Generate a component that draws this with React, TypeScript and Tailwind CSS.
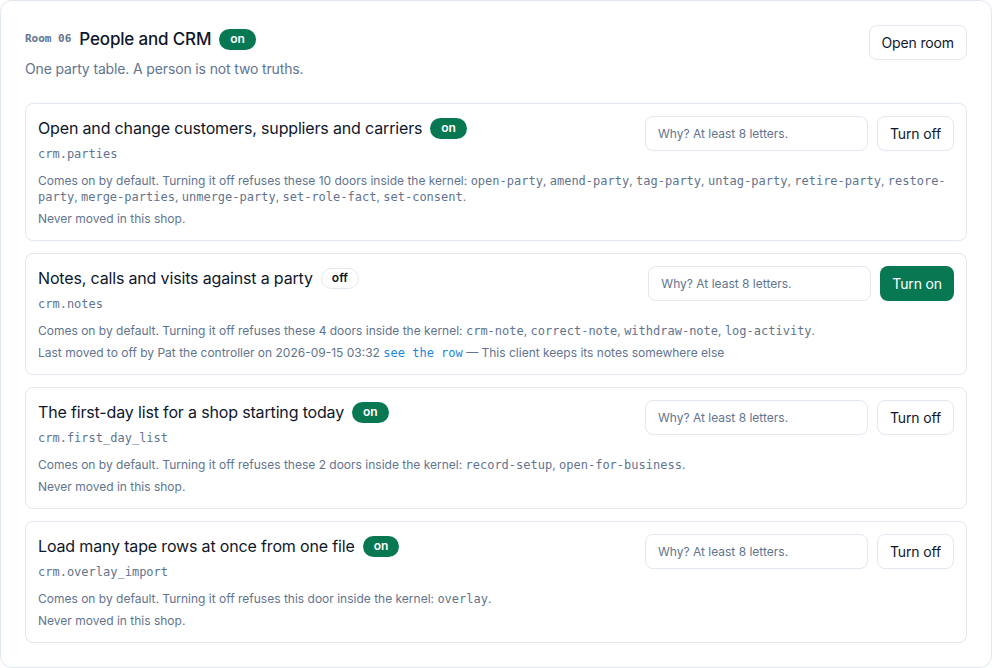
import React from "react";

type Switch = {
  title: string;
  on: boolean;
  key: string;
  doors: string[];
  countText: string;
  history: React.ReactNode;
};

const sans = "font-['Inter','Noto_Sans',sans-serif]";
const mono = "font-['DejaVu_Sans_Mono','Liberation_Mono',monospace]";

const switches: Switch[] = [
  {
    title: "Open and change customers, suppliers and carriers",
    on: true,
    key: "crm.parties",
    countText: "these 10 doors",
    doors: [
      "open-party",
      "amend-party",
      "tag-party",
      "untag-party",
      "retire-party",
      "restore-party",
      "merge-parties",
      "unmerge-party",
      "set-role-fact",
      "set-consent",
    ],
    history: "Never moved in this shop.",
  },
  {
    title: "Notes, calls and visits against a party",
    on: false,
    key: "crm.notes",
    countText: "these 4 doors",
    doors: ["crm-note", "correct-note", "withdraw-note", "log-activity"],
    history: (
      <>
        Last moved to off by Pat the controller on 2026-09-15 03:32{" "}
        <a className={`${mono} text-[#1a87e0]`}>see the row</a> — This client keeps its notes somewhere else
      </>
    ),
  },
  {
    title: "The first-day list for a shop starting today",
    on: true,
    key: "crm.first_day_list",
    countText: "these 2 doors",
    doors: ["record-setup", "open-for-business"],
    history: "Never moved in this shop.",
  },
  {
    title: "Load many tape rows at once from one file",
    on: true,
    key: "crm.overlay_import",
    countText: "this door",
    doors: ["overlay"],
    history: "Never moved in this shop.",
  },
];

function Badge({ on }: { on: boolean }) {
  return on ? (
    <span className="inline-flex h-[21px] items-center rounded-full bg-[#077852] px-[11px] text-xs font-semibold text-white">
      on
    </span>
  ) : (
    <span className="inline-flex h-[21px] items-center rounded-full border border-slate-200 bg-white px-[10px] text-xs font-semibold text-slate-900">
      off
    </span>
  );
}

function SwitchCard({ s }: { s: Switch }) {
  return (
    <div className="rounded-lg border border-slate-200 bg-white px-3 pt-3 pb-[13px]">
      <div className="flex items-start justify-between gap-4">
        <div>
          <div className="flex items-center gap-2">
            <h3 className="text-base leading-6 tracking-[-0.01em] text-slate-900">{s.title}</h3>
            <Badge on={s.on} />
          </div>
          <div className={`${mono} mt-1.5 text-xs leading-4 text-slate-500`}>{s.key}</div>
        </div>
        <div className="flex shrink-0 items-center gap-[9px]">
          <input
            placeholder="Why? At least 8 letters."
            className="h-[35px] w-[223px] rounded-lg border border-slate-200 bg-white px-3 text-xs text-slate-900 outline-none placeholder:text-slate-500"
          />
          {s.on ? (
            <button className="h-[35px] rounded-lg border border-slate-200 bg-white px-3 text-sm tracking-[-0.01em] text-slate-900">
              Turn off
            </button>
          ) : (
            <button className="h-[35px] rounded-lg bg-[#077852] px-3 text-sm tracking-[-0.01em] text-white">
              Turn on
            </button>
          )}
        </div>
      </div>
      <p className="mt-[11px] text-xs leading-4 text-slate-500">
        Comes on by default. Turning it off refuses {s.countText} inside the kernel:{" "}
        {s.doors.map((d, i) => (
          <React.Fragment key={d}>
            <code className={`${mono} text-slate-500`}>{d}</code>
            {i < s.doors.length - 1 ? ", " : "."}
          </React.Fragment>
        ))}
      </p>
      <p className="mt-1.5 text-xs leading-4 text-slate-500">{s.history}</p>
    </div>
  );
}

export default function App() {
  return (
    <div className={`${sans} bg-white`}>
      <section className="w-[992px] rounded-xl border border-slate-200 bg-white p-6">
        <div className="flex items-start justify-between">
          <div>
            <div className="flex items-center gap-2">
              <span className={`${mono} text-[11px] font-semibold text-slate-500`}>Room 06</span>
              <h2 className="text-[17px] leading-7 font-medium tracking-[-0.01em] text-slate-900">People and CRM</h2>
              <Badge on />
            </div>
            <p className="mt-1.5 text-sm leading-5 tracking-[-0.01em] text-slate-500">
              One party table. A person is not two truths.
            </p>
          </div>
          <button className="h-[35px] rounded-lg border border-slate-200 bg-white px-3 text-sm tracking-[-0.01em] text-slate-900">
            Open room
          </button>
        </div>
        <div className="mt-6 space-y-3">
          {switches.map((s) => (
            <SwitchCard key={s.key} s={s} />
          ))}
        </div>
      </section>
    </div>
  );
}
